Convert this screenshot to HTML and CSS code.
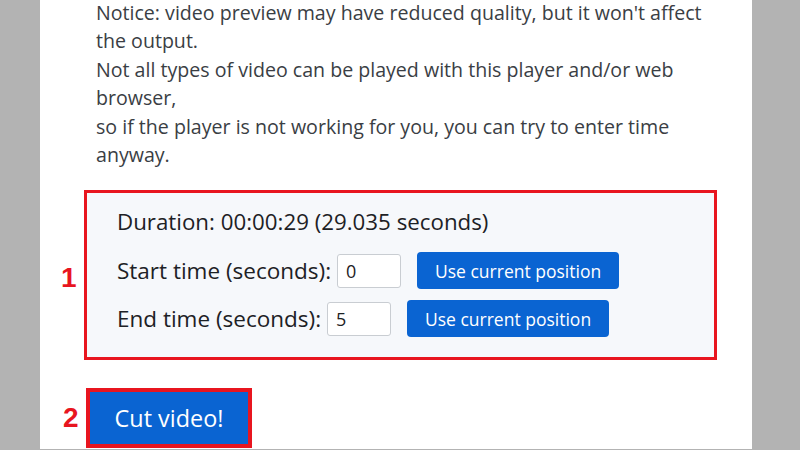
FILE: index.html
```html
<!DOCTYPE html>
<html>
<head>
<meta charset="utf-8">
<link rel="stylesheet" href="styles.css">
</head>
<body>
<div class="page">
  <div class="notice">
    <p>Notice: video preview may have reduced quality, but it won't affect the output.</p>
    <p>Not all types of video can be played with this player and/or web browser,</p>
    <p>so if the player is not working for you, you can try to enter time anyway.</p>
  </div>
  <div class="marked-row">
    <span class="mark mark-1">1</span>
    <div class="time-box">
      <div class="duration">Duration: 00:00:29 (29.035 seconds)</div>
      <div class="field-row">
        <label class="field-label">Start time (seconds):</label>
        <input class="time-input" type="text" value="0">
        <button class="btn btn-small">Use current position</button>
      </div>
      <div class="field-row">
        <label class="field-label">End time (seconds):</label>
        <input class="time-input" type="text" value="5">
        <button class="btn btn-small">Use current position</button>
      </div>
    </div>
  </div>
  <div class="marked-row cut-row">
    <span class="mark mark-2">2</span>
    <div class="cut-frame">
      <button class="btn btn-cut">Cut video!</button>
    </div>
  </div>
</div>
</body>
</html>
```
FILE: styles.css
```css
html, body {
  margin: 0;
  padding: 0;
  background: #b3b3b3;
  height: 450px;
  overflow: hidden;
}
body {
  font-family: "Open Sans", "Noto Sans", sans-serif;
  color: #3a3e44;
}
.page {
  margin: 0 48px 0 40px;
  background: #ffffff;
  height: 450px;
  padding: 0 0 0 56px;
  box-sizing: border-box;
}
.notice {
  width: 615px;
  font-size: 19.6px;
  line-height: 28.4px;
  margin-top: -1px;
}
.notice p {
  margin: 0;
}
.marked-row {
  display: flex;
  align-items: center;
  margin-left: -34px;
}
.mark {
  color: #e8151f;
  font-family: "Liberation Sans", Arial, sans-serif;
  font-weight: bold;
  font-size: 28px;
  width: 22px;
}
.mark-1 {
  margin-top: 26px;
  margin-left: -1px;
  width: 23px;
}
.time-box {
  margin-top: 21px;
  border: 3px solid #e8151f;
  background: #f6f8fb;
  width: 633px;
  height: 170px;
  padding: 15px 0 0 30px;
  box-sizing: border-box;
  color: #1d2125;
}
.duration {
  font-size: 22.3px;
  line-height: 28px;
  margin-bottom: 16px;
}
.field-row {
  display: flex;
  align-items: center;
  height: 37px;
  margin-bottom: 11px;
}
.field-label {
  font-size: 22.5px;
}
.time-input {
  width: 64px;
  height: 34px;
  box-sizing: border-box;
  border: 1px solid #c9cdd2;
  border-radius: 3px;
  background: #fff;
  font-family: "Open Sans", sans-serif;
  font-size: 18px;
  padding: 0 8px;
  margin-left: 6px;
  margin-right: 16px;
  color: #1d2125;
}
.btn {
  background: #0a64d2;
  color: #fff;
  border: none;
  font-family: "Open Sans", "Noto Sans", sans-serif;
}
.btn-small {
  width: 202px;
  height: 37px;
  border-radius: 4px;
  font-size: 17.5px;
  padding: 0;
}
.cut-row {
  margin-top: 28px;
  margin-left: -33px;
}
.mark-2 {
  width: 23px;
}
.cut-frame {
  border: 4px solid #e8151f;
  line-height: 0;
}
.btn-cut {
  width: 158px;
  height: 52px;
  font-size: 23.4px;
  padding: 0;
}
```
